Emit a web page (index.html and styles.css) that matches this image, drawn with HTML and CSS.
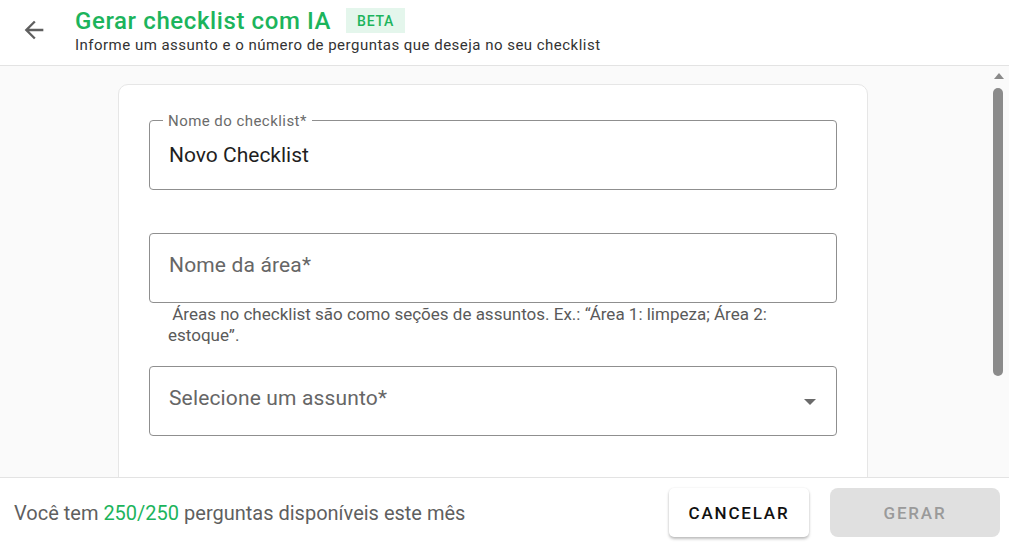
FILE: index.html
```html
<!DOCTYPE html>
<html lang="pt-BR">
<head>
<meta charset="utf-8">
<title>Gerar checklist com IA</title>
<link rel="stylesheet" href="styles.css">
</head>
<body>
<div class="app">
  <header class="header">
    <button class="back" aria-label="Voltar">
      <svg viewBox="0 0 24 24" width="28" height="28"><path d="M20 11H7.83l5.59-5.59L12 4l-8 8 8 8 1.41-1.41L7.83 13H20v-2z" fill="#5f5f5f"/></svg>
    </button>
    <div class="titles">
      <div class="title-row">
        <h1 class="title">Gerar checklist com IA</h1>
        <span class="chip">BETA</span>
      </div>
      <p class="subtitle">Informe um assunto e o número de perguntas que deseja no seu checklist</p>
    </div>
  </header>

  <main class="main">
    <section class="card">
      <div class="field filled">
        <span class="float-label">Nome do checklist*</span>
        <span class="value">Novo Checklist</span>
      </div>

      <div class="field empty spaced">
        <span class="placeholder">Nome da área*</span>
      </div>
      <p class="helper">&nbsp;Áreas no checklist são como seções de assuntos. Ex.: “Área 1: limpeza; Área 2: estoque”.</p>

      <div class="field empty select">
        <span class="placeholder">Selecione um assunto*</span>
        <svg class="caret" viewBox="7 10 10 5" width="12" height="6"><path d="M7 10l5 5 5-5z" fill="#6a6a6a"/></svg>
      </div>
    </section>

    <div class="scrollbar">
      <span class="arrow-up"></span>
      <span class="thumb"></span>
    </div>
  </main>

  <footer class="footer">
    <p class="quota">Você tem <span class="green">250/250</span> perguntas disponíveis este mês</p>
    <div class="actions">
      <button class="btn btn-cancel">CANCELAR</button>
      <button class="btn btn-gen" disabled>GERAR</button>
    </div>
  </footer>
</div>
</body>
</html>
```

FILE: styles.css
```css
* { box-sizing: border-box; }

html, body {
  margin: 0;
  padding: 0;
  height: 543px;
  overflow: hidden;
  background: #ffffff;
  font-family: Roboto, "Liberation Sans", Arial, sans-serif;
}

.app {
  display: flex;
  flex-direction: column;
  height: 543px;
}

/* Header */
.header {
  height: 66px;
  flex: 0 0 66px;
  border-bottom: 1px solid #e3e3e3;
  display: flex;
  align-items: flex-start;
  background: #fff;
}

.back {
  border: 0;
  background: transparent;
  padding: 0;
  margin: 16px 0 0 20px;
  width: 28px;
  height: 28px;
  display: flex;
  cursor: pointer;
}

.titles {
  margin-left: 27px;
  padding-top: 7px;
}

.title-row {
  display: flex;
  align-items: center;
  height: 28px;
}

.title {
  margin: 0;
  font-size: 24px;
  line-height: 28px;
  font-weight: 500;
  letter-spacing: 0.6px;
  color: #1cb45c;
}

.chip {
  margin-left: 15px;
  height: 25px;
  padding: 0 11px;
  display: inline-flex;
  align-items: center;
  background: #e4f6ec;
  color: #1cb45c;
  font-size: 14px;
  font-weight: 500;
  letter-spacing: 0.7px;
  margin-top: -1px;
}

.subtitle {
  margin: 2px 0 0;
  font-size: 15px;
  line-height: 16px;
  letter-spacing: 0.48px;
  color: #333333;
}

/* Main */
.main {
  position: relative;
  flex: 1 1 auto;
  background: #fafafa;
  overflow: hidden;
  display: flex;
  justify-content: center;
  align-items: flex-start;
  padding: 18px 23px 0 0;
}

.card {
  width: 750px;
  min-height: 420px;
  background: #fff;
  border: 1px solid #e6e6e6;
  border-radius: 10px;
  padding: 35px 30px 0;
}

.field {
  position: relative;
  height: 70px;
  border: 1px solid #8f8f8f;
  border-radius: 4px;
  display: flex;
  align-items: center;
  padding: 0 19px;
}

.field.filled { padding-bottom: 0; }
.field.empty { padding-bottom: 6px; }

.field.spaced { margin-top: 43px; }

.float-label {
  position: absolute;
  top: -9px;
  left: 13px;
  padding: 0 5px;
  background: #fff;
  font-size: 15px;
  line-height: 18px;
  letter-spacing: 0.45px;
  color: #6b6b6b;
}

.value {
  font-size: 21px;
  color: #1f1f1f;
}

.placeholder {
  font-size: 21px;
  color: #666666;
  letter-spacing: 0.15px;
}

.helper {
  margin: 1px 0 20px;
  padding: 0 19px;
  font-size: 17px;
  line-height: 21px;
  color: #5a5a5a;
}

.select { justify-content: space-between; }
.caret { margin-right: 1px; margin-top: 8px; }

/* Fake scrollbar overlay */
.scrollbar {
  position: absolute;
  top: 0;
  right: 0;
  width: 19px;
  height: 100%;
  background: #fafafa;
}

.arrow-up {
  position: absolute;
  top: 7px;
  left: 4px;
  width: 0;
  height: 0;
  border-left: 5px solid transparent;
  border-right: 5px solid transparent;
  border-bottom: 6px solid #8a8a8a;
}

.thumb {
  position: absolute;
  top: 22px;
  left: 3px;
  width: 10px;
  height: 288px;
  border-radius: 5px;
  background: #8b8b8b;
}

/* Footer */
.footer {
  flex: 0 0 66px;
  height: 66px;
  border-top: 1px solid #e3e3e3;
  display: flex;
  align-items: center;
  padding: 4px 9px 0 14px;
  background: #fff;
}

.quota {
  margin: 0;
  font-size: 20px;
  color: #5f5f5f;
}

.green { color: #1cb45c; }

.actions {
  margin-left: auto;
  display: flex;
  gap: 21px;
}

.btn {
  height: 49px;
  border: 0;
  font-family: Roboto, "Liberation Sans", Arial, sans-serif;
  font-size: 17px;
  font-weight: 500;
  letter-spacing: 1.8px;
}

.btn-cancel {
  width: 140px;
  background: #fff;
  color: #111;
  border-radius: 5px;
  box-shadow: 0 2px 3px rgba(0,0,0,0.25), 0 0 2px rgba(0,0,0,0.08);
}

.btn-gen {
  width: 170px;
  background: #e0e0e0;
  color: #9a9a9a;
  border-radius: 8px;
}
```
